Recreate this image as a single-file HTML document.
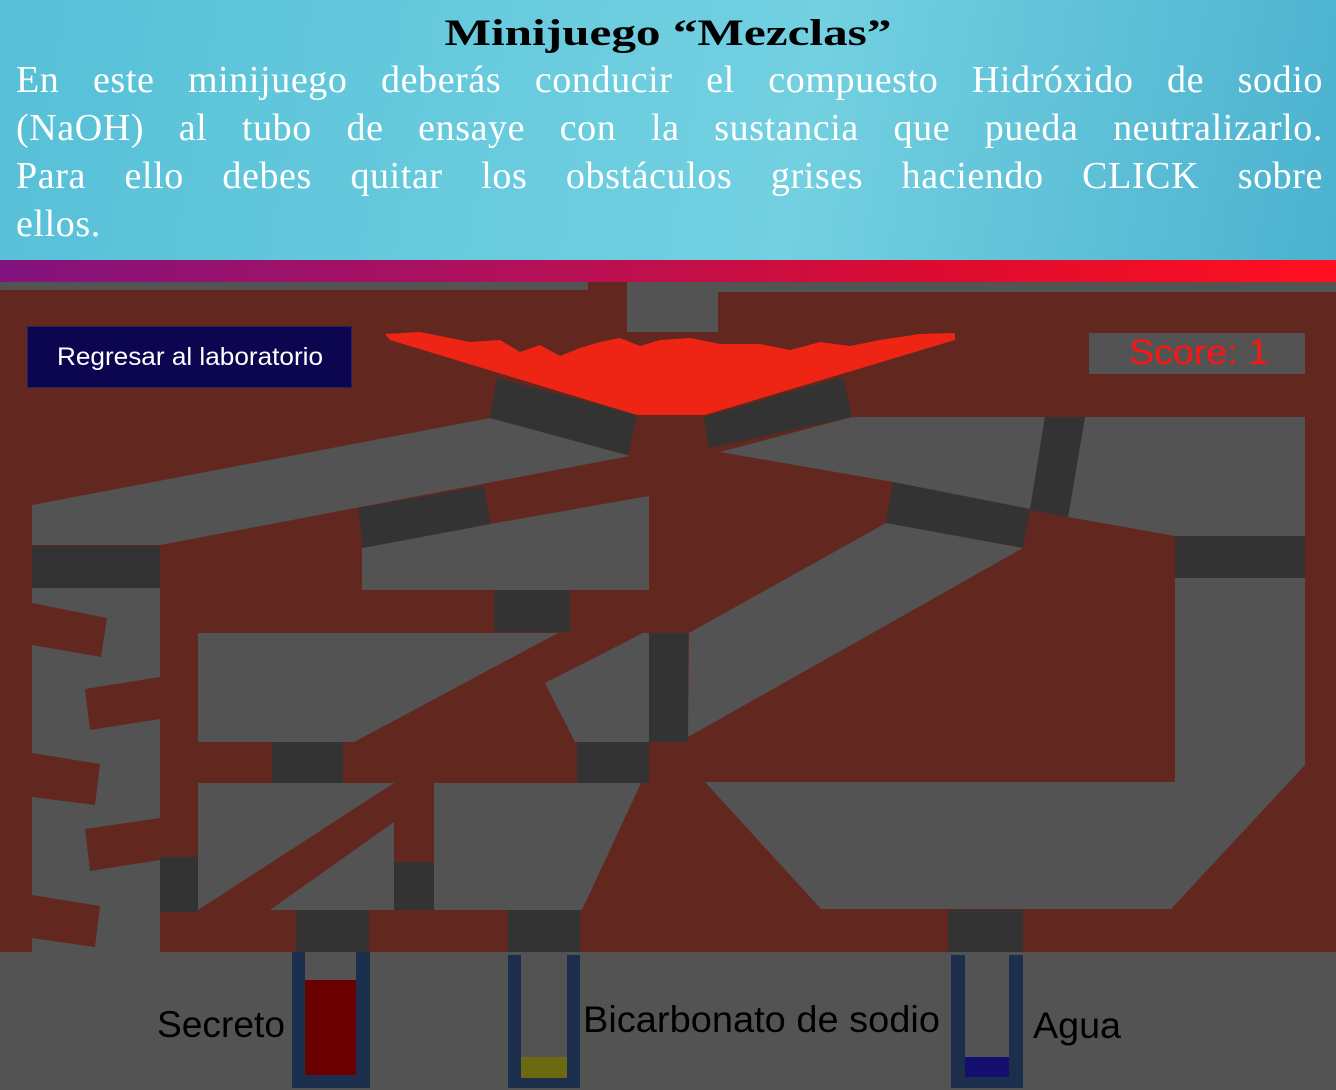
<!DOCTYPE html>
<html><head><meta charset="utf-8"><style>
html,body{margin:0;padding:0;width:1336px;height:1090px;overflow:hidden;background:#535353}
#hdr{position:absolute;left:0;top:0;width:1336px;height:260px;background:linear-gradient(100deg,#56c0d7 0%,#6ccddf 45%,#72d0e0 60%,#4cb2cf 100%)}
#title{position:absolute;left:0;top:12px;width:1336px;text-align:center;font:bold 37px "Liberation Serif",serif;color:#000}
#title span{display:inline-block;transform:scaleX(1.33)}
.ln{position:absolute;left:16px;width:1307px;font:38px "Liberation Serif",serif;color:#fff;letter-spacing:0.6px;white-space:nowrap;text-align:justify;text-align-last:justify}
#bar{position:absolute;left:0;top:260px;width:1336px;height:22px;background:linear-gradient(90deg,#82137e,#b41058 40%,#dc0c30 70%,#ff1020)}
svg{position:absolute;left:0;top:0}
</style></head><body>
<div id="hdr"></div>
<div id="title"><span>Minijuego “Mezclas”</span></div>
<div class="ln" style="top:58px">En este minijuego deberás conducir el compuesto Hidróxido de sodio</div>
<div class="ln" style="top:106px">(NaOH) al tubo de ensaye con la sustancia que pueda neutralizarlo.</div>
<div class="ln" style="top:154px">Para ello debes quitar los obstáculos grises haciendo CLICK sobre</div>
<div class="ln" style="top:202px;text-align-last:left">ellos.</div>
<div id="bar"></div>
<svg width="1336" height="1090" viewBox="0 0 1336 1090">
<g>
<rect x="0" y="282" width="1336" height="670" fill="#62281f"/>
<g fill="#535353">
<rect x="0" y="282" width="588" height="8"/>
<rect x="627" y="282" width="91" height="50"/>
<rect x="718" y="282" width="618" height="10"/>
<polygon points="32,505 490,418 630,456 160,545 32,545"/>
<polygon points="362,548 490,524 649,496 649,590 362,590"/>
<rect x="32" y="588" width="128" height="364"/>
<polygon points="198,633 558,633 354,742 198,742"/>
<polygon points="643,633 649,633 649,742 575,742 545,683"/>
<polygon points="198,783 394,783 198,910"/>
<polygon points="394,822 394,910 270,910"/>
<polygon points="434,783 641,783 582,910 434,910"/>
<polygon points="720,452 852,417 1045,417 1030,509 893,482"/>
<polygon points="1085,417 1305,417 1305,536 1175,536 1068,517"/>
<polygon points="1175,578 1305,578 1305,765 1171,909 821,909 705,782 1175,782"/>
<polygon points="689,633 886,523 1023,548 688,737"/>
<rect x="1089" y="333" width="216" height="41"/>
</g>
<g fill="#62281f">
<polygon points="32,603 107,618 101,657 32,645"/>
<polygon points="160,677 85,689 90,730 160,719"/>
<polygon points="32,753 100,764 95,805 32,797"/>
<polygon points="160,818 85,829 90,871 160,860"/>
<polygon points="32,895 100,906 95,947 32,938"/>
</g>
<g fill="#333">
<polygon points="497,378 637,415 628,455 490,418"/>
<polygon points="704,417 843,377 852,417 709,448"/>
<polygon points="358,508 484,486 490,524 363,548"/>
<rect x="32" y="546" width="128" height="42"/>
<rect x="494" y="590" width="76" height="42"/>
<rect x="160" y="857" width="38" height="55"/>
<rect x="272" y="742" width="71" height="41"/>
<rect x="577" y="742" width="72" height="41"/>
<rect x="394" y="862" width="40" height="48"/>
<rect x="296" y="910" width="73" height="42"/>
<rect x="508" y="910" width="72" height="42"/>
<rect x="948" y="910" width="75" height="42"/>
<polygon points="1045,417 1085,417 1068,517 1030,510"/>
<polygon points="893,482 1030,509 1023,548 886,523"/>
<rect x="1175" y="536" width="130" height="42"/>
<rect x="649" y="633" width="39" height="109"/>
</g>
<path d="M385,334 L420,332 L440,336 L470,342 L500,340 L520,352 L540,345 L560,356 L580,348 L600,342 L620,338 L640,346 L660,340 L690,338 L720,344 L760,344 L790,350 L820,342 L850,346 L880,340 L920,334 L955,333 L955,340 L705,415 L637,415 L390,340 Z" fill="#ee2414"/>
<rect x="27.5" y="326.5" width="324" height="61" fill="#0c0650" stroke="#2a2060"/>
<text x="57" y="365" font-family="Liberation Sans,sans-serif" font-size="25" fill="#fff" textLength="266" lengthAdjust="spacingAndGlyphs">Regresar al laboratorio</text>
<text x="1129" y="364" font-family="Liberation Sans,sans-serif" font-size="35" fill="#ff1414" textLength="140" lengthAdjust="spacingAndGlyphs">Score: 1</text>
<g fill="#1b2f4c">
<rect x="292" y="952" width="13" height="136"/><rect x="356" y="952" width="14" height="136"/><rect x="292" y="1075" width="78" height="13"/>
<rect x="508" y="955" width="13" height="133"/><rect x="567" y="955" width="13" height="133"/><rect x="508" y="1078" width="72" height="10"/>
<rect x="951" y="955" width="14" height="133"/><rect x="1009" y="955" width="14" height="133"/><rect x="951" y="1077" width="72" height="11"/>
</g>
<rect x="305" y="980" width="51" height="95" fill="#6a0000"/>
<rect x="521" y="1057" width="46" height="21" fill="#6b6a10"/>
<rect x="965" y="1057" width="44" height="20" fill="#140f6e"/>
<g font-family="Liberation Sans,sans-serif" font-size="37" fill="#000">
<text x="157" y="1037" textLength="128" lengthAdjust="spacingAndGlyphs">Secreto</text>
<text x="583" y="1032" textLength="357" lengthAdjust="spacingAndGlyphs">Bicarbonato de sodio</text>
<text x="1033" y="1038" textLength="88" lengthAdjust="spacingAndGlyphs">Agua</text>
</g>
</g>
</svg>
</body></html>
